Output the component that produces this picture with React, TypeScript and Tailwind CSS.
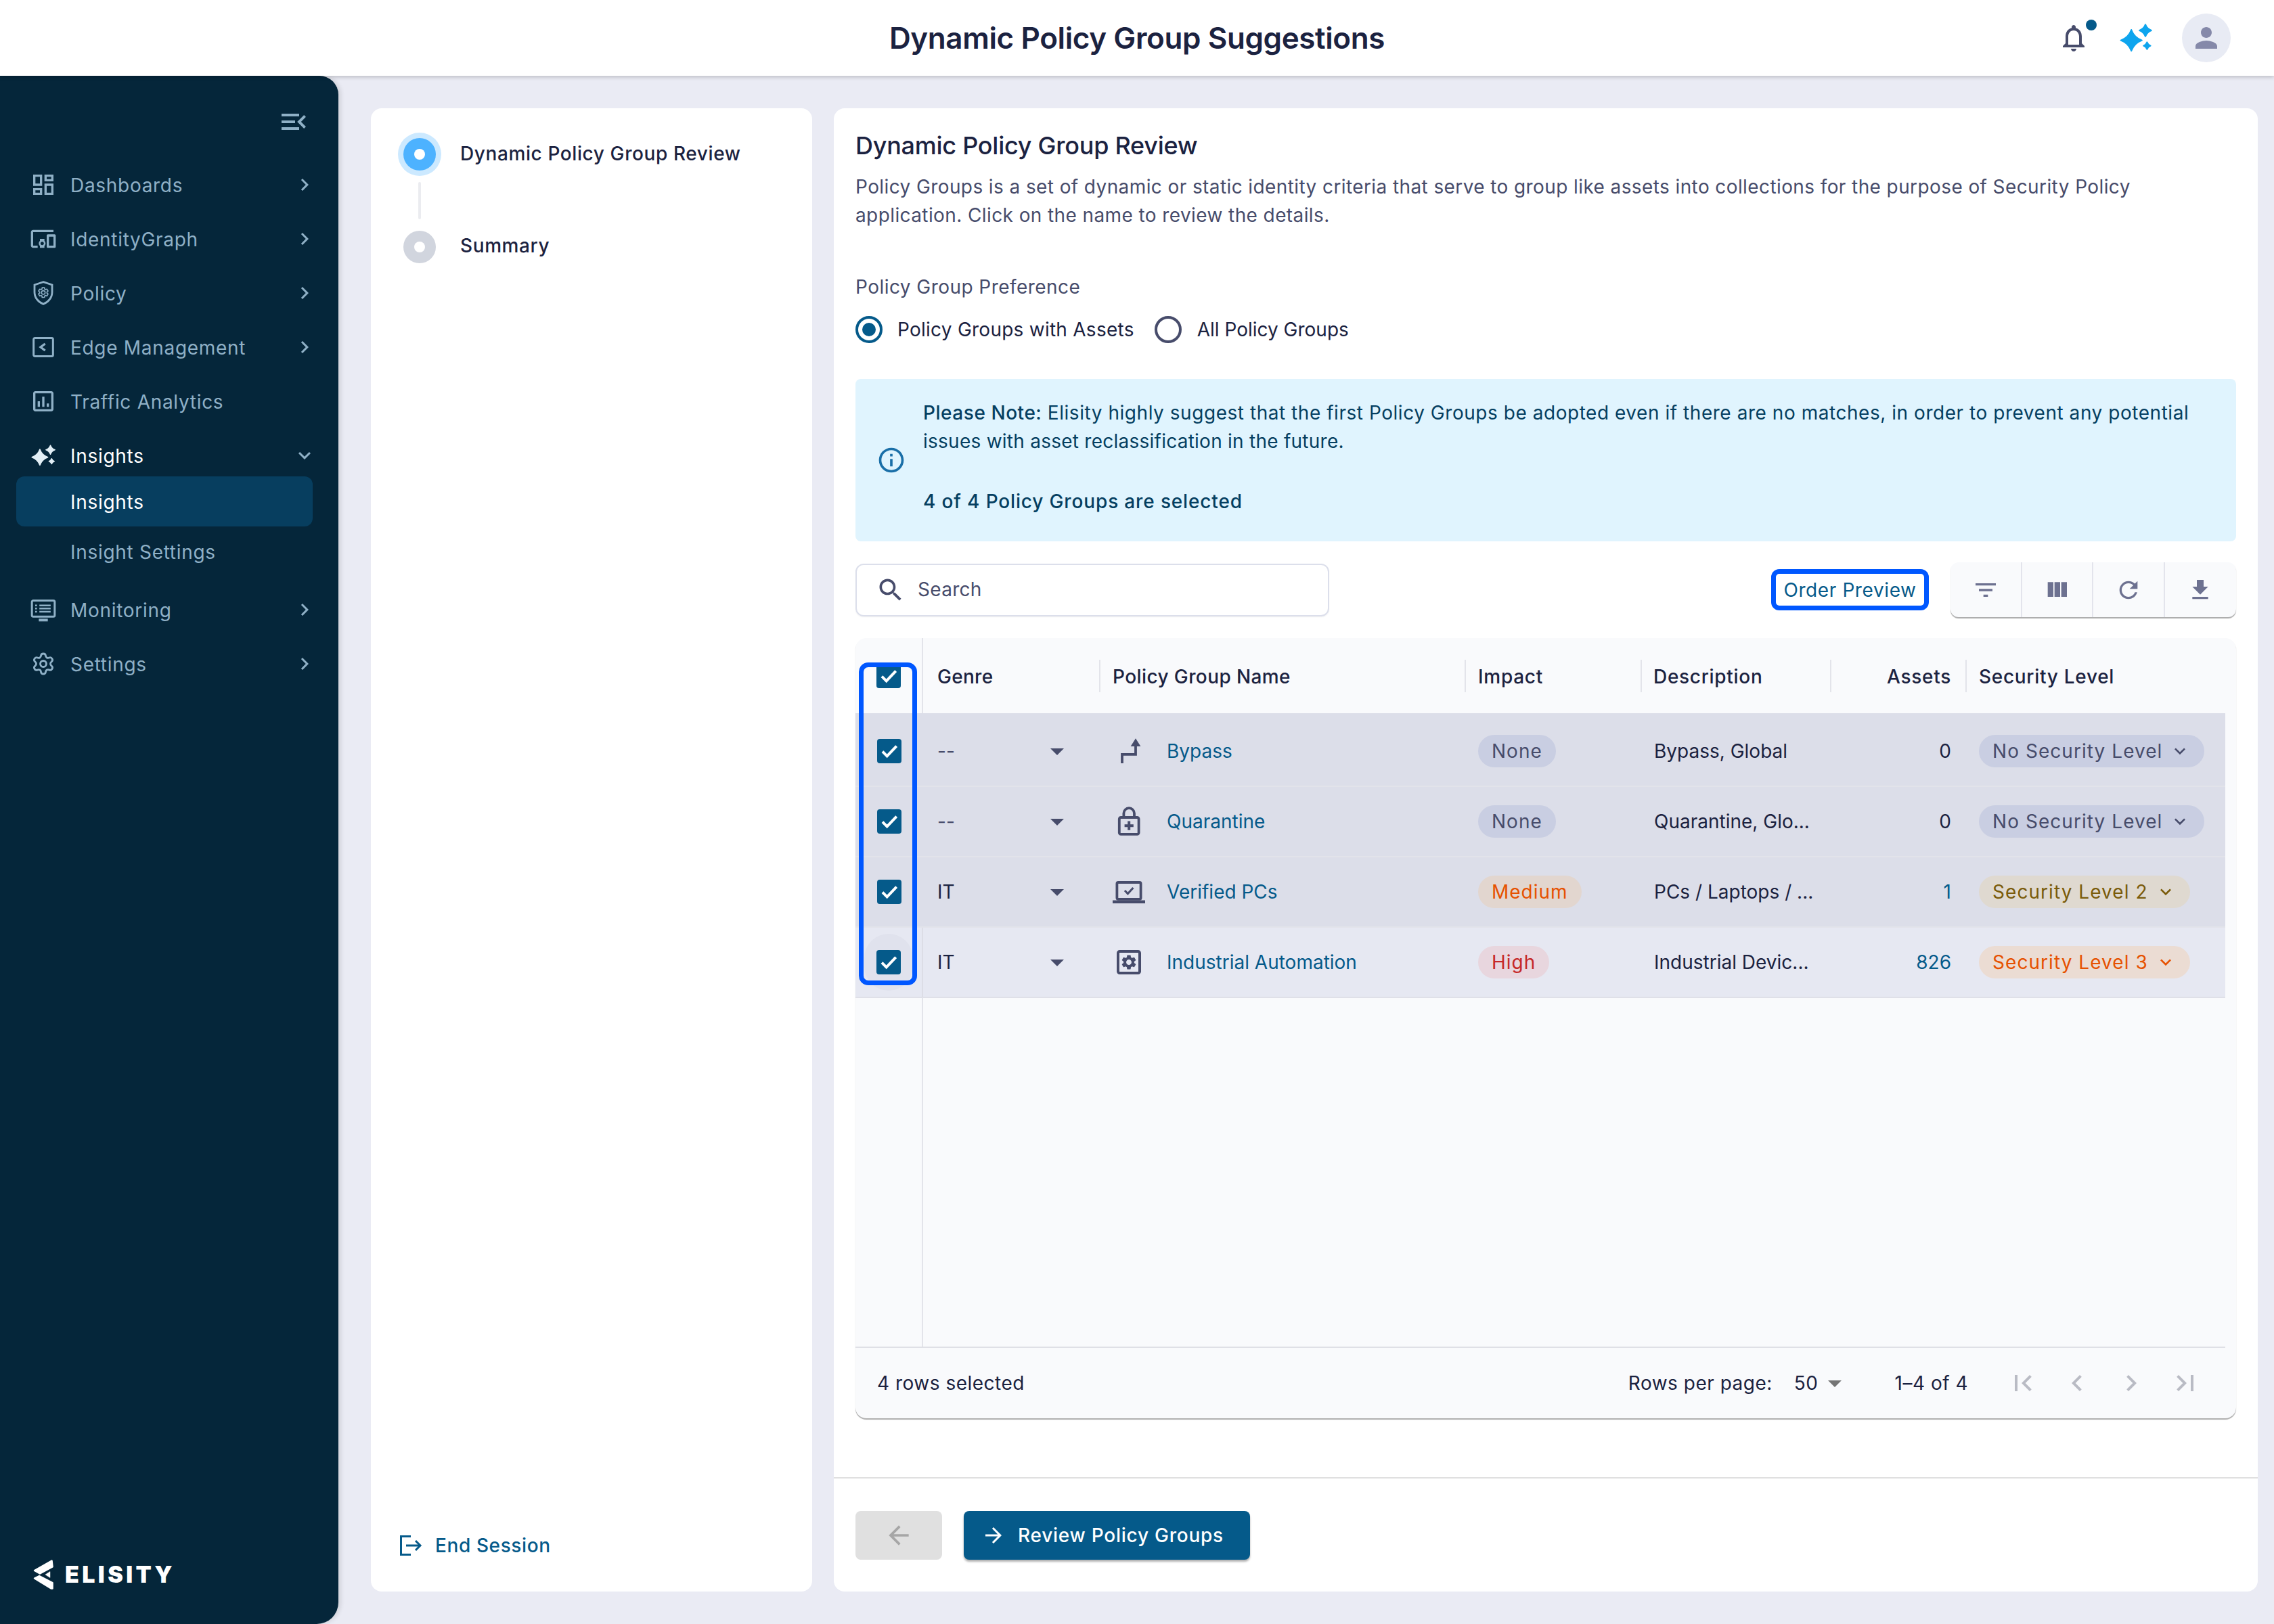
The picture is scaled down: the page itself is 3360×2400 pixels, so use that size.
import React from 'react';
import { Settings } from 'lucide-react';

const P = {
  chevR: 'M10 6L8.59 7.41 13.17 12l-4.58 4.59L10 18l6-6z',
  chevL: 'M15.41 7.41L14 6l-6 6 6 6 1.41-1.41L10.83 12z',
  expand: 'M16.59 8.59L12 13.17 7.41 8.59 6 10l6 6 6-6z',
  menuOpen: 'M3 18h13v-2H3v2zm0-5h10v-2H3v2zm0-7v2h13V6H3zm18 9.59L17.42 12 21 8.41 19.59 7l-5 5 5 5L21 15.59z',
  dashboard: 'M19 5v2h-4V5h4M9 5v6H5V5h4m10 8v6h-4v-6h4M9 17v2H5v-2h4M21 3h-8v6h8V3zM11 3H3v10h8V3zm10 8h-8v10h8V11zm-10 4H3v6h8v-6z',
  devices: 'M3 6h18V4H3c-1.1 0-2 .9-2 2v12c0 1.1.9 2 2 2h4v-2H3V6zm10 6H9v1.78c-.61.55-1 1.33-1 2.22s.39 1.67 1 2.22V20h4v-1.78c.61-.55 1-1.34 1-2.22s-.39-1.67-1-2.22V12zm-2 5.5c-.83 0-1.5-.67-1.5-1.5s.67-1.5 1.5-1.5 1.5.67 1.5 1.5-.67 1.5-1.5 1.5zM22 8h-6c-.5 0-1 .5-1 1v10c0 .5.5 1 1 1h6c.5 0 1-.5 1-1V9c0-.5-.5-1-1-1zm-1 10h-4v-8h4v8z',
  traffic: 'M19 3H5c-1.1 0-2 .9-2 2v14c0 1.1.9 2 2 2h14c1.1 0 2-.9 2-2V5c0-1.1-.9-2-2-2zm0 16H5V5h14v14zM7 12h2v5H7zm4-4h2v9h-2zm4 6h2v3h-2z',
  gear: 'M19.14 12.94c.04-.3.06-.61.06-.94 0-.32-.02-.64-.07-.94l2.03-1.58c.18-.14.23-.41.12-.61l-1.92-3.32c-.12-.22-.37-.29-.59-.22l-2.39.96c-.5-.38-1.03-.7-1.62-.94l-.36-2.54c-.04-.24-.24-.41-.48-.41h-3.84c-.24 0-.43.17-.47.41l-.36 2.54c-.59.24-1.13.57-1.62.94l-2.39-.96c-.22-.08-.47 0-.59.22L2.74 8.87c-.12.21-.08.47.12.61l2.03 1.58c-.05.3-.09.63-.09.94s.02.64.07.94l-2.03 1.58c-.18.14-.23.41-.12.61l1.92 3.32c.12.22.37.29.59.22l2.39-.96c.5.38 1.03.7 1.62.94l.36 2.54c.05.24.24.41.48.41h3.84c.24 0 .44-.17.47-.41l.36-2.54c.59-.24 1.13-.56 1.62-.94l2.39.96c.22.08.47 0 .59-.22l1.92-3.32c.12-.22.07-.47-.12-.61l-2.01-1.58zM12 15.6c-1.98 0-3.6-1.62-3.6-3.6s1.62-3.6 3.6-3.6 3.6 1.62 3.6 3.6-1.62 3.6-3.6 3.6z',
  bell: 'M12 22c1.1 0 2-.9 2-2h-4c0 1.1.9 2 2 2zm6-6v-5c0-3.07-1.63-5.64-4.5-6.32V4c0-.83-.67-1.5-1.5-1.5s-1.5.67-1.5 1.5v.68C7.64 5.36 6 7.92 6 11v5l-2 2v1h16v-1l-2-2zm-2 1H8v-6c0-2.48 1.51-4.5 4-4.5s4 2.02 4 4.5v6z',
  person: 'M12 12c2.21 0 4-1.79 4-4s-1.79-4-4-4-4 1.79-4 4 1.79 4 4 4zm0 2c-2.67 0-8 1.34-8 4v2h16v-2c0-2.66-5.33-4-8-4z',
  filter: 'M10 18h4v-2h-4v2zM3 6v2h18V6H3zm3 7h12v-2H6v2z',
  columns: 'M10 18h5V5h-5v13zm-6 0h5V5H4v13zM16 5v13h5V5h-5z',
  refresh: 'M17.65 6.35C16.2 4.9 14.21 4 12 4c-4.42 0-7.99 3.58-7.99 8s3.57 8 7.99 8c3.73 0 6.84-2.55 7.73-6h-2.08c-.82 2.33-3.04 4-5.65 4-3.31 0-6-2.69-6-6s2.69-6 6-6c1.66 0 3.14.69 4.22 1.78L13 11h7V4l-2.35 2.35z',
  download: 'M19 9h-4V3H9v6H5l7 7 7-7zM5 18v2h14v-2H5z',
  search: 'M15.5 14h-.79l-.28-.27C15.41 12.59 16 11.11 16 9.5 16 5.91 13.09 3 9.5 3S3 5.91 3 9.5 5.91 16 9.5 16c1.61 0 3.09-.59 4.23-1.57l.27.28v.79l5 4.99L20.49 19l-4.99-5zm-6 0C7.01 14 5 11.99 5 9.5S7.01 5 9.5 5 14 7.01 14 9.5 11.99 14 9.5 14z',
  first: 'M18.41 16.59L13.82 12l4.59-4.59L17 6l-6 6 6 6zM6 6h2v12H6z',
  last: 'M5.59 7.41L10.18 12l-4.59 4.59L7 18l6-6-6-6zM16 6h2v12h-2z',
  arrowR: 'M12 4l-1.41 1.41L16.17 11H4v2h12.17l-5.58 5.59L12 20l8-8z',
  arrowL: 'M20 11H7.83l5.59-5.59L12 4l-8 8 8 8 1.41-1.41L7.83 13H20v-2z',
  info: 'M11 7h2v2h-2zm0 4h2v6h-2zm1-9C6.48 2 2 6.48 2 12s4.48 10 10 10 10-4.48 10-10S17.52 2 12 2zm0 18c-4.41 0-8-3.59-8-8s3.59-8 8-8 8 3.59 8 8-3.59 8-8 8z',
  drop: 'M7 10l5 5 5-5z',
};

const Ico = ({ d, className }: { d: string; className: string }) => (
  <svg viewBox="0 0 24 24" fill="currentColor" className={className}>
    <path d={d} />
  </svg>
);

// four point star, the body is a bit fat like the product's sparkle
const star = (x: number, y: number, r: number) => {
  const c = r * 0.27;
  return `M${x} ${y - r}Q${x + c} ${y - c} ${x + r} ${y}Q${x + c} ${y + c} ${x} ${y + r}Q${x - c} ${y + c} ${x - r} ${y}Q${x - c} ${y - c} ${x} ${y - r}z`;
};

const Sparkles = ({ className }: { className: string }) => (
  <svg viewBox="0 0 24 24" fill="currentColor" stroke="currentColor" strokeWidth="1" strokeLinejoin="round" className={className}>
    <path d={star(8.6, 13.8, 7.8)} />
    <path d={star(19, 6.5, 4.4)} />
    <path d={star(20.2, 17.8, 2.6)} />
  </svg>
);

const ShieldIcon = () => (
  <svg viewBox="0 0 24 24" className="w-[40px] h-[40px]" fill="none" stroke="currentColor">
    <path d="M12 2.2l7.8 2.6v6.4c0 4.8-3.2 8.8-7.8 10.6-4.6-1.8-7.8-5.8-7.8-10.6V4.8z" strokeWidth="1.7" />
    <g transform="translate(6.6 6.2) scale(.45)">
      <path d={P.gear} strokeWidth="2.2" />
    </g>
  </svg>
);

const EdgeIcon = () => (
  <svg viewBox="0 0 24 24" className="w-[40px] h-[40px]" fill="none" stroke="currentColor" strokeWidth="1.8">
    <rect x="3.4" y="3.9" width="17.2" height="16.2" rx="1.2" />
    <path d="M13.6 9L9.6 12l4 3" strokeWidth="2" />
  </svg>
);

const MonitorIcon = () => (
  <svg viewBox="0 0 24 24" className="w-[40px] h-[40px]" fill="none" stroke="currentColor" strokeWidth="1.8">
    <rect x="1.9" y="3.9" width="20.2" height="14.2" rx="1.2" />
    <path d="M8 21.2h8" strokeWidth="2.4" />
    <path d="M8.5 8.2h10M8.5 11h10M8.5 13.8h10M4.8 8.2h1.6M4.8 11h1.6M4.8 13.8h1.6" strokeWidth="1.5" />
  </svg>
);

const NavItem = ({ label, icon }: { label: string; icon: React.ReactNode }) => (
  <div className="h-[80px] flex items-center text-[#8fb0c6]">
    <div className="w-[40px] h-[40px] ml-[44px] mr-[20px] flex items-center justify-center">{icon}</div>
    <span className="flex-1 pt-[2px] text-[28px] tracking-[0.7px]">{label}</span>
    <Ico d={P.chevR} className="w-[36px] h-[36px] mr-[32px]" />
  </div>
);

const Sidebar = () => (
  <aside className="w-[500px] shrink-0 bg-[#05263a] rounded-tr-[28px] rounded-br-[32px] shadow-[4px_0_6px_rgba(0,0,0,0.1)] flex flex-col pt-[44px] relative z-10">
    <div className="flex justify-end pr-[42px] text-[#8fb0c6]">
      <Ico d={P.menuOpen} className="w-[48px] h-[48px]" />
    </div>
    <div className="mt-[29px]">
      <NavItem label="Dashboards" icon={<Ico d={P.dashboard} className="w-[40px] h-[40px]" />} />
      <NavItem label="IdentityGraph" icon={<Ico d={P.devices} className="w-[40px] h-[40px]" />} />
      <NavItem label="Policy" icon={<ShieldIcon />} />
      <NavItem label="Edge Management" icon={<EdgeIcon />} />
      <div className="h-[80px] flex items-center text-[#8fb0c6]">
        <div className="w-[40px] h-[40px] ml-[44px] mr-[20px]">
          <Ico d={P.traffic} className="w-[40px] h-[40px]" />
        </div>
        <span className="pt-[2px] text-[28px] tracking-[0.7px]">Traffic Analytics</span>
      </div>
      <div className="h-[80px] flex items-center">
        <div className="w-[40px] h-[40px] ml-[44px] mr-[20px] flex items-center justify-center text-[#e3eff6]">
          <Sparkles className="w-[36px] h-[36px]" />
        </div>
        <span className="flex-1 pt-[2px] text-[28px] tracking-[0.7px] text-white">Insights</span>
        <Ico d={P.expand} className="w-[36px] h-[36px] mr-[32px] text-[#8fb0c6]" />
      </div>
      <div className="-mt-[9px] ml-[24px] w-[438px] h-[74px] rounded-[12px] bg-[#073e5f] flex items-center pl-[80px] pt-[1px] text-[28px] tracking-[0.7px] text-white">
        Insights
      </div>
      <div className="h-[76px] flex items-center pl-[104px] text-[28px] tracking-[0.7px] text-[#8fb0c6]">Insight Settings</div>
      <div className="mt-[7px]">
        <NavItem label="Monitoring" icon={<MonitorIcon />} />
        <NavItem label="Settings" icon={<Settings className="w-[36px] h-[36px]" strokeWidth={1.9} />} />
      </div>
    </div>
    <div className="mt-auto mb-[50px] ml-[49px] flex items-center text-white">
      <svg viewBox="0 0 30 46" className="w-[30px] h-[46px]" fill="currentColor" stroke="currentColor" strokeWidth="2.5" strokeLinejoin="round">
        <path d="M27.5 2.5L28.5 11.5L10 21.5L2 17z" />
        <path d="M2 28.5L9 25L28.5 35V43.5L26.5 43.5z" />
        <path d="M25 18.5L18 23l7 4.5z" strokeWidth="0.5" />
      </svg>
      <span className="ml-[17px] text-[34px] leading-none font-black tracking-[4.4px]">ELISITY</span>
    </div>
  </aside>
);

const StepsPanel = () => (
  <section className="w-[652px] shrink-0 bg-white rounded-[16px] flex flex-col pl-[40px]">
    <div className="mt-[36px] flex items-center h-[64px]">
      <div className="w-[64px] h-[64px] rounded-full bg-[#cce9ff] flex items-center justify-center">
        <div className="w-[48px] h-[48px] rounded-full bg-[#4db2ff] flex items-center justify-center">
          <div className="w-[16px] h-[16px] rounded-full bg-white" />
        </div>
      </div>
      <span className="ml-[28px] pb-[3px] text-[28px] tracking-[0.6px] font-[450] text-[#1b2240]">Dynamic Policy Group Review</span>
    </div>
    <div className="ml-[30px] mt-[9px] w-[4px] h-[55px] rounded-full bg-[#ebecf0]" />
    <div className="mt-[17px] flex items-center h-[48px] pl-[8px]">
      <div className="w-[48px] h-[48px] rounded-full bg-[#d1d5de] flex items-center justify-center">
        <div className="w-[16px] h-[16px] rounded-full bg-white" />
      </div>
      <span className="ml-[36px] pb-[5px] text-[28px] tracking-[0.6px] font-[450] text-[#1b2240]">Summary</span>
    </div>
    <div className="mt-auto mb-[48px] ml-[3px] flex items-center text-[#055a8a] h-[40px]">
      <svg viewBox="0 0 34 30" className="w-[34px] h-[30px]" fill="none" stroke="currentColor">
        <path d="M16 1.5H1.5v27H16" strokeWidth="3" />
        <path d="M9 15h21M23 8l7 7-7 7" strokeWidth="3" />
      </svg>
      <span className="ml-[18px] text-[28px] tracking-[0.6px] font-[450]">End Session</span>
    </div>
  </section>
);

const Check = () => (
  <div className="w-[36px] h-[36px] rounded-[4px] bg-[#055a8a] flex items-center justify-center relative">
    <svg viewBox="0 0 24 24" className="w-[32px] h-[32px]" fill="none" stroke="#fff" strokeWidth="3">
      <path d="M4.5 12.5l5 5L20 6.5" />
    </svg>
  </div>
);

const BypassIcon = () => (
  <svg viewBox="0 0 24 24" className="w-[48px] h-[48px]" fill="none" stroke="#474c6b" strokeWidth="1.9">
    <path d="M7 21v-6.6h10V5" />
    <path d="M14.2 8L17 3.6 19.8 8z" fill="#474c6b" strokeWidth="1" />
  </svg>
);

const LockIcon = () => (
  <svg viewBox="0 0 24 24" className="w-[48px] h-[48px]" fill="none" stroke="#474c6b" strokeWidth="1.9">
    <rect x="4.9" y="9" width="14.4" height="12.4" rx="1.2" />
    <path d="M8.2 9V6a3.9 3.9 0 017.8 0v3" />
    <path d="M12.1 11.8v6.6M8.8 15.1h6.6" strokeWidth="2" />
  </svg>
);

const LaptopIcon = () => (
  <svg viewBox="0 0 24 24" className="w-[48px] h-[48px]" fill="none" stroke="#474c6b" strokeWidth="1.9">
    <rect x="3.2" y="5" width="17.6" height="12.4" rx="1" />
    <path d="M0 19.4h24" strokeWidth="2.2" />
    <path d="M9 11l2.2 2.4 4-4.4" strokeWidth="1.5" />
  </svg>
);

const GearBoxIcon = () => (
  <svg viewBox="0 0 24 24" className="w-[48px] h-[48px]" fill="none">
    <rect x="4" y="4" width="16" height="16" rx="1.2" stroke="#474c6b" strokeWidth="2" />
    <g transform="translate(5.4 5.4) scale(.55)">
      <path d={P.gear} fill="#474c6b" />
    </g>
  </svg>
);

const cols = 'grid grid-cols-[100px_260px_540px_260px_280px_200px_384px]';

type Row = {
  genre: string;
  icon: React.ReactNode;
  name: string;
  impact: string;
  impactClass: string;
  desc: string;
  assets: string;
  assetsClass: string;
  level: string;
  levelClass: string;
};

const rows: Row[] = [
  { genre: '--', icon: <BypassIcon />, name: 'Bypass', impact: 'None', impactClass: 'bg-[#c9cee2] text-[#474c6b]', desc: 'Bypass, Global', assets: '0', assetsClass: 'text-[#1b2240]', level: 'No Security Level', levelClass: 'bg-[#c9cee2] text-[#474c6b]' },
  { genre: '--', icon: <LockIcon />, name: 'Quarantine', impact: 'None', impactClass: 'bg-[#c9cee2] text-[#474c6b]', desc: 'Quarantine, Glo...', assets: '0', assetsClass: 'text-[#1b2240]', level: 'No Security Level', levelClass: 'bg-[#c9cee2] text-[#474c6b]' },
  { genre: 'IT', icon: <LaptopIcon />, name: 'Verified PCs', impact: 'Medium', impactClass: 'bg-[#e2d6cf] text-[#e65100]', desc: 'PCs / Laptops / ...', assets: '1', assetsClass: 'text-[#055a8a]', level: 'Security Level 2', levelClass: 'bg-[#dfd9d0] text-[#7a5b0a]' },
  { genre: 'IT', icon: <GearBoxIcon />, name: 'Industrial Automation', impact: 'High', impactClass: 'bg-[#e8d6de] text-[#c62828]', desc: 'Industrial Devic...', assets: '826', assetsClass: 'text-[#055a8a]', level: 'Security Level 3', levelClass: 'bg-[#ebdcd3] text-[#e65100]' },
];

const Head = ({ children, right, pl }: { children: React.ReactNode; right?: boolean; pl: string }) => (
  <div className={`flex items-center h-[48px] border-l-2 border-[#e3e4ea] ${pl} font-medium text-[28px] tracking-[0.7px] text-[#1b2240]`}>
    {right ? <span className="ml-auto pr-[21px] pt-[3px]">{children}</span> : <span className="pt-[3px]">{children}</span>}
  </div>
);

const PolicyTable = () => (
  <div className="relative mt-[31px] h-[1153px] rounded-[16px] bg-[#f9fafc] shadow-[0_2px_1px_rgba(0,0,0,0.32)] flex flex-col">
    <div className={`${cols} h-[111px] items-center shrink-0`}>
      <div className="h-[111px] border-r-2 border-[#e3e4ea] flex justify-center items-center">
        <Check />
      </div>
      <div className="flex items-center h-[48px] pl-[21px] pt-[3px] font-medium text-[28px] tracking-[0.3px] text-[#1b2240]">Genre</div>
      <Head pl="pl-[18px]">
        <span className="tracking-[0.4px]">Policy Group Name</span>
      </Head>
      <Head pl="pl-[18px]">Impact</Head>
      <Head pl="pl-[17px]">Description</Head>
      <Head right pl="pl-[18px]">
        Assets
      </Head>
      <Head pl="pl-[18px]">Security Level</Head>
    </div>
    <div className="h-[5px] w-[2024px] shrink-0 bg-[#dcdee9]" />
    {rows.map((r, i) => (
      <div key={r.name} className={`${cols} h-[104px] w-[2024px] shrink-0 items-center border-b-2 ${i === 3 ? 'bg-[#e6e8f2] border-[#dfe0e8]' : 'bg-[#dcdee9] border-[#e2e3ea]'}`}>
        <div className={`h-full flex items-center justify-center ${i === 3 ? 'border-r-2 border-[#dcdde6]' : ''}`}>
          {i === 3 ? (
            <div className="w-[72px] h-[84px] rounded-full bg-[#e0e2ed] flex items-center justify-center">
              <Check />
            </div>
          ) : (
            <Check />
          )}
        </div>
        <div className="flex items-center pl-[21px] pr-[38px] text-[28px] text-[#474c6b]">
          <span className={`flex-1 ${r.genre === 'IT' ? 'text-[#1b2240]' : ''}`}>{r.genre}</span>
          <Ico d={P.drop} className="w-[48px] h-[48px]" />
        </div>
        <div className="flex items-center pl-[20px]">
          {r.icon}
          <span className="ml-[32px] text-[28px] text-[#055a8a]">{r.name}</span>
        </div>
        <div className="pl-[20px]">
          <span className={`inline-flex items-center h-[48px] px-[20px] rounded-full text-[28px] tracking-[1px] ${r.impactClass}`}>{r.impact}</span>
        </div>
        <div className="pl-[20px] text-[28px] text-[#1b2240]">{r.desc}</div>
        <div className={`text-right pr-[21px] text-[28px] ${r.assetsClass}`}>{r.assets}</div>
        <div className="pl-[20px]">
          <span className={`inline-flex items-center h-[48px] pl-[20px] pr-[20px] rounded-full text-[28px] tracking-[1.05px] ${r.levelClass}`}>
            {r.level}
            <Ico d={P.expand} className="ml-[10px] w-[32px] h-[32px]" />
          </span>
        </div>
      </div>
    ))}
    <div className="flex-1 flex">
      <div className="w-[100px] border-r-2 border-[#e3e4ea]" />
    </div>
    <div className="h-[106px] shrink-0 mr-[16px] border-t-2 border-[#dfe0e6] flex items-center pl-[32px] text-[28px] tracking-[0.5px] text-[#1b2240]">
      <span>4 rows selected</span>
      <span className="ml-auto">Rows per page:</span>
      <span className="ml-[32px]">50</span>
      <Ico d={P.drop} className="w-[48px] h-[48px] text-[#757575]" />
      <span className="ml-[65px]">1–4 of 4</span>
      <div className="ml-[57px] mr-[35px] flex items-center gap-[32px] text-[#b9bbc4]">
        <Ico d={P.first} className="w-[48px] h-[48px]" />
        <Ico d={P.chevL} className="w-[48px] h-[48px]" />
        <Ico d={P.chevR} className="w-[48px] h-[48px]" />
        <Ico d={P.last} className="w-[48px] h-[48px]" />
      </div>
    </div>
    <div className="absolute left-[5px] top-[36px] w-[86px] h-[477px] rounded-[14px] border-[7px] border-[#0057ff]" />
  </div>
);

const MainPanel = () => (
  <section className="flex-1 bg-white rounded-[16px] flex flex-col">
    <div className="px-[32px] flex-1 flex flex-col">
      <h2 className="mt-[31px] text-[36px] leading-[48px] font-[450] tracking-[-0.25px] text-[#1b2240]">Dynamic Policy Group Review</h2>
      <p className="mt-[16px] text-[28px] leading-[42px] tracking-[0.4px] text-[#474c6b]">
        Policy Groups is a set of dynamic or static identity criteria that serve to group like assets into collections for the purpose of Security Policy
        <br />
        application. Click on the name to review the details.
      </p>
      <div className="mt-[65px] text-[28px] leading-[40px] tracking-[0.45px] text-[#474c6b]">Policy Group Preference</div>
      <div className="mt-[23px] h-[40px] flex items-center text-[28px] text-[#1b2240]">
        <div className="w-[40px] h-[40px] rounded-full border-[4px] border-[#055a8a] flex items-center justify-center">
          <div className="w-[20px] h-[20px] rounded-full bg-[#055a8a]" />
        </div>
        <span className="ml-[22px] tracking-[0.25px]">Policy Groups with Assets</span>
        <div className="ml-[30px] w-[40px] h-[40px] rounded-full border-[4px] border-[#474c6b]" />
        <span className="ml-[23px]">All Policy Groups</span>
      </div>
      <div className="mt-[53px] h-[240px] rounded-[8px] bg-[#e0f4fe] flex items-center pl-[35px]">
        <Ico d={P.info} className="w-[44px] h-[44px] -ml-[4px] text-[#1a6fa8]" />
        <div className="self-start pt-[29px] ml-[25px] text-[28px] leading-[42px] text-[#053f61]">
          <p className="tracking-[0.54px]">
            <span className="font-medium">Please Note:</span> Elisity highly suggest that the first Policy Groups be adopted even if there are no matches, in order to prevent any potential
          </p>
          <p className="tracking-[0.25px]">issues with asset reclassification in the future.</p>
          <p className="mt-[47px] font-[450] tracking-[0.85px]">4 of 4 Policy Groups are selected</p>
        </div>
      </div>
      <div className="mt-[31px] h-[81px] flex items-center">
        <div className="w-[700px] h-[78px] rounded-[12px] border-2 border-[#dcdfeb] shadow-[0_1px_2px_rgba(0,0,0,0.06)] flex items-center pl-[28px] text-[#474c6b]">
          <Ico d={P.search} className="w-[44px] h-[44px]" />
          <span className="ml-[18px] pb-[2px] text-[28px] tracking-[0.3px]">Search</span>
        </div>
        <div className="ml-auto w-[233px] h-[61px] rounded-[12px] border-[7px] border-[#0057ff] flex items-center justify-center text-[28px] tracking-[0.6px] text-[#055a8a]">
          Order Preview
        </div>
        <div className="ml-[32px] w-[422px] h-[81px] rounded-[12px] bg-[#f9fafc] shadow-[0_2px_1px_rgba(0,0,0,0.32)] grid grid-cols-4 divide-x-2 divide-[#e3e4ec] text-[#6d7190]">
          {[P.filter, P.columns, P.refresh, P.download].map(d => (
            <div key={d} className="flex items-center justify-center">
              <Ico d={d} className="w-[40px] h-[40px]" />
            </div>
          ))}
        </div>
      </div>
      <PolicyTable />
    </div>
    <div className="h-[169px] shrink-0 border-t-2 border-[#e0e0e0] pl-[32px] pt-[48px] flex items-start">
      <div className="w-[128px] h-[72px] rounded-[8px] bg-[#e0e0e0] flex items-center justify-center text-[#a6a6a6]">
        <Ico d={P.arrowL} className="w-[44px] h-[44px]" />
      </div>
      <div className="ml-[32px] w-[423px] h-[72px] rounded-[8px] bg-[#055a8a] shadow-[0_3px_3px_rgba(0,0,0,0.3)] flex items-center pl-[26px] text-white">
        <Ico d={P.arrowR} className="w-[36px] h-[36px]" />
        <span className="ml-[18px] text-[28px] tracking-[0.75px] font-[450]">Review Policy Groups</span>
      </div>
    </div>
  </section>
);

export default function App() {
  return (
    <div className="w-[3360px] h-[2400px] bg-[#eaebf4] flex flex-col overflow-hidden font-['Inter',sans-serif]">
      <header className="relative z-20 h-[112px] shrink-0 bg-white shadow-[0_2px_6px_rgba(0,0,0,0.2)] grid grid-cols-3 items-center">
        <div />
        <h1 className="text-center whitespace-nowrap text-[44px] font-semibold tracking-[-0.4px] text-[#1b2240]">Dynamic Policy Group Suggestions</h1>
        <div className="flex items-center justify-end pr-[64px]">
          <div className="relative w-[48px] h-[48px] text-[#474c6b]">
            <Ico d={P.bell} className="w-[48px] h-[48px]" />
            <div className="absolute -top-[3px] right-[-10px] w-[16px] h-[16px] rounded-full bg-[#055a8a]" />
          </div>
          <Sparkles className="ml-[44px] w-[48px] h-[48px] text-[#0ea5ee]" />
          <div className="ml-[44px] w-[72px] h-[72px] rounded-full bg-[#e8ebf4] flex items-center justify-center text-[#8589a9]">
            <Ico d={P.person} className="w-[48px] h-[48px]" />
          </div>
        </div>
      </header>
      <div className="flex-1 flex min-h-0">
        <Sidebar />
        <div className="flex-1 flex gap-[32px] pl-[48px] pr-[24px] py-[48px] min-w-0">
          <StepsPanel />
          <MainPanel />
        </div>
      </div>
    </div>
  );
}
